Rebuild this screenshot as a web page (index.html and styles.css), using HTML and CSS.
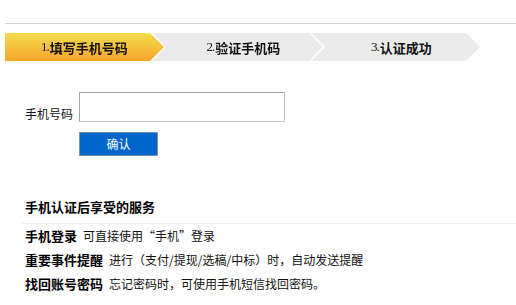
FILE: index.html
```html
<!DOCTYPE html>
<html lang="zh-CN">
<head>
<meta charset="utf-8">
<title>手机认证</title>
<link rel="stylesheet" href="styles.css">
</head>
<body>
<div class="page">
  <div class="topline"></div>
  <div class="steps">
    <div class="step step-active"><div class="shape"><span class="num">1.</span>填写手机号码</div></div>
    <div class="step step-mid"><div class="shape"><span class="num">2.</span>验证手机码</div></div>
    <div class="step step-last"><div class="shape"><span class="num">3.</span>认证成功</div></div>
  </div>

  <form class="form">
    <div class="field">
      <label class="label" for="phone">手机号码</label>
      <input class="input" id="phone" type="text">
    </div>
    <button class="btn" type="button">确认</button>
  </form>

  <div class="services">
    <h3 class="services-title">手机认证后享受的服务</h3>
    <div class="row"><b class="name">手机登录</b><span class="desc">可直接使用“手机”登录</span></div>
    <div class="row"><b class="name">重要事件提醒</b><span class="desc">进行（支付/提现/选稿/中标）时，自动发送提醒</span></div>
    <div class="row"><b class="name">找回账号密码</b><span class="desc">忘记密码时，可使用手机短信找回密码。</span></div>
  </div>
</div>
</body>
</html>
```

FILE: styles.css
```css
html, body {
  margin: 0;
  padding: 0;
  background: #fff;
}
body {
  font-family: "Noto Sans CJK SC", "Noto Sans", sans-serif;
  font-size: 12px;
  color: #000;
}
.page {
  width: 516px;
  padding-top: 23px;
}
.topline {
  margin-left: 5px;
  height: 0;
  border-top: 1px solid #d2d2d2;
}
.steps {
  display: flex;
  margin: 9px 0 0 5px;
  height: 28px;
}
.step {
  position: relative;
  flex: none;
  height: 28px;
  margin-right: -14px;
  filter: drop-shadow(2px 0 0 #fff);
}
.step-active { width: 159px; z-index: 3; }
.step-mid { width: 173px; z-index: 2; }
.step-last { width: 171px; z-index: 1; filter: none; }
.shape {
  height: 28px;
  display: flex;
  align-items: center;
  justify-content: center;
  padding-left: 14px;
  background: #ebebeb;
  clip-path: polygon(0 0, calc(100% - 14px) 0, 100% 14px, calc(100% - 14px) 28px, 0 28px);
  font-size: 13px;
  font-weight: bold;
  color: #111;
  font-family: "Liberation Serif", "Noto Sans CJK SC", serif;
}
.step-active .shape {
  padding-left: 0;
  background: linear-gradient(#f3dc4c, #f7a62b);
}
.num {
  font-weight: normal;
  letter-spacing: -1px;
  margin-right: 1px;
}

.form {
  margin: 31px 0 0 25px;
}
.field {
  display: flex;
  align-items: flex-end;
}
.label {
  line-height: 16px;
  width: 48px;
  margin-right: 6px;
  color: #111;
}
.input {
  box-sizing: border-box;
  width: 206px;
  height: 30px;
  margin: 0;
  border: 1px solid #a3a3a3;
  border-right-color: #c9c9c9;
  border-bottom-color: #c9c9c9;
  padding: 0 4px;
}
.btn {
  display: block;
  box-sizing: border-box;
  margin: 10px 0 0 54px;
  width: 79px;
  height: 24px;
  padding: 0;
  background: #0066cc;
  border: 1px solid #7f93ad;
  color: #fff;
  font-family: "Noto Sans CJK SC", sans-serif;
  font-size: 12px;
  line-height: 20px;
}

.services {
  margin: 41px 0 0 22px;
}
.services-title {
  margin: 0;
  padding: 0 0 6px 3px;
  line-height: 20px;
  font-size: 13px;
  font-weight: bold;
  border-bottom: 1px solid #eeeeee;
}
.row {
  padding-left: 3px;
  line-height: 24px;
  font-size: 12px;
}
.name {
  font-size: 13px;
  margin-right: 6px;
}
.desc {
  color: #111;
}
```
